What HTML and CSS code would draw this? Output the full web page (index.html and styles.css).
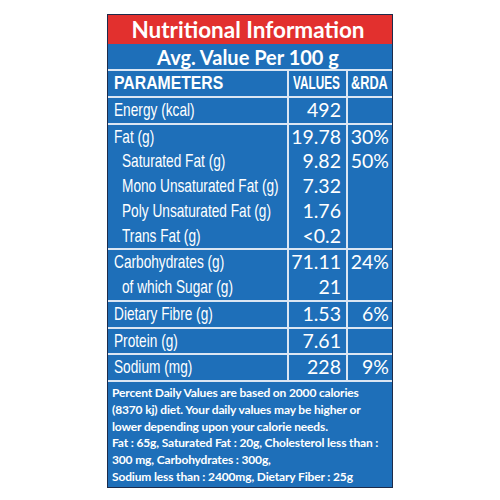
FILE: index.html
```html
<!DOCTYPE html>
<html>
<head>
<meta charset="utf-8">
<link rel="stylesheet" href="styles.css">
</head>
<body>
<div class="label">
  <div class="title">Nutritional Information</div>
  <div class="subtitle">Avg. Value Per 100 g</div>
  <table class="facts">
    <colgroup><col class="c-param"><col class="c-val"><col class="c-rda"></colgroup>
    <tr class="head">
      <td class="param"><span class="h h-param">PARAMETERS</span></td>
      <td class="val"><span class="h h-val">VALUES</span></td>
      <td class="rda"><span class="h h-rda">&amp;RDA</span></td>
    </tr>
    <tr>
      <td class="param"><div><span class="t">Energy (kcal)</span></div></td>
      <td class="val"><div>492</div></td>
      <td class="rda"><div>&nbsp;</div></td>
    </tr>
    <tr>
      <td class="param">
        <div><span class="t">Fat (g)</span></div>
        <div class="sub"><span class="t">Saturated Fat (g)</span></div>
        <div class="sub"><span class="t">Mono Unsaturated Fat (g)</span></div>
        <div class="sub"><span class="t">Poly Unsaturated Fat (g)</span></div>
        <div class="sub"><span class="t">Trans Fat (g)</span></div>
      </td>
      <td class="val">
        <div>19.78</div><div>9.82</div><div>7.32</div><div>1.76</div><div>&lt;0.2</div>
      </td>
      <td class="rda">
        <div>30%</div><div>50%</div><div>&nbsp;</div><div>&nbsp;</div><div>&nbsp;</div>
      </td>
    </tr>
    <tr>
      <td class="param">
        <div><span class="t">Carbohydrates (g)</span></div>
        <div class="sub"><span class="t">of which Sugar (g)</span></div>
      </td>
      <td class="val"><div>71.11</div><div>21</div></td>
      <td class="rda"><div>24%</div><div>&nbsp;</div></td>
    </tr>
    <tr>
      <td class="param"><div><span class="t">Dietary Fibre (g)</span></div></td>
      <td class="val"><div>1.53</div></td>
      <td class="rda"><div>6%</div></td>
    </tr>
    <tr>
      <td class="param"><div><span class="t">Protein (g)</span></div></td>
      <td class="val"><div>7.61</div></td>
      <td class="rda"><div>&nbsp;</div></td>
    </tr>
    <tr>
      <td class="param"><div><span class="t">Sodium (mg)</span></div></td>
      <td class="val"><div>228</div></td>
      <td class="rda"><div>9%</div></td>
    </tr>
  </table>
  <div class="note">Percent Daily Values are based on 2000 calories<br>(8370 kj) diet. Your daily values may be higher or<br>lower depending upon your calorie needs.<br>Fat : 65g, Saturated Fat : 20g, Cholesterol less than :<br>300 mg, Carbohydrates : 300g,<br>Sodium less than : 2400mg, Dietary Fiber : 25g</div>
</div>
</body>
</html>
```

FILE: styles.css
```css
html, body {
  margin: 0;
  padding: 0;
  background: #ffffff;
}

.label {
  margin: 14px 0 0 107px;
  width: 284px;
  border: 1px solid #1d2b4a;
  background: #1e6fb9;
  color: #ffffff;
  font-family: Lato, "Open Sans", sans-serif;
}

.title {
  background: #e2302e;
  height: 29px;
  line-height: 29px;
  text-align: center;
  font-weight: 700;
  font-size: 22.5px;
  padding-right: 4px;
}

.subtitle {
  height: 25px;
  line-height: 26px;
  text-align: center;
  font-weight: 700;
  font-size: 20px;
  border-bottom: 2px solid #dbe6f3;
  padding-right: 4px;
}

.facts {
  width: 100%;
  border-collapse: collapse;
  table-layout: fixed;
}

.c-param { width: 180px; }
.c-val { width: 59px; }
.c-rda { width: 45px; }

.facts tr {
  border-bottom: 2px solid #dbe6f3;
}

.facts td {
  padding: 0;
  vertical-align: top;
  line-height: 24.75px;
  white-space: nowrap;
  overflow: visible;
}

.facts td + td {
  border-left: 2px solid #dbe6f3;
}

.param {
  font-family: "Liberation Sans", Arial, sans-serif;
  font-size: 19px;
  padding-left: 6px !important;
}

.param .sub {
  padding-left: 8px;
}

.t {
  display: inline-block;
  transform: scaleX(0.72);
  transform-origin: left center;
}

.val {
  text-align: right;
  font-size: 19.5px;
  padding-right: 5px !important;
}

.rda {
  text-align: right;
  font-size: 19.5px;
  padding-right: 3px !important;
}

.head td {
  font-family: "Liberation Sans", Arial, sans-serif;
  font-weight: 700;
  font-size: 19px;
  text-align: left;
}

.h {
  display: inline-block;
}

.h-param {
  transform: scaleX(0.83);
  transform-origin: left center;
}

.h-val {
  transform: scaleX(0.62);
  transform-origin: left center;
  margin-left: 4px;
}

.h-rda {
  transform: scaleX(0.67);
  transform-origin: left center;
  margin-left: 3px;
}

.note {
  padding: 3px 4px 1px 4px;
  font-size: 12px;
  letter-spacing: -0.15px;
  line-height: 16.8px;
  font-weight: 700;
  white-space: nowrap;
}
```
